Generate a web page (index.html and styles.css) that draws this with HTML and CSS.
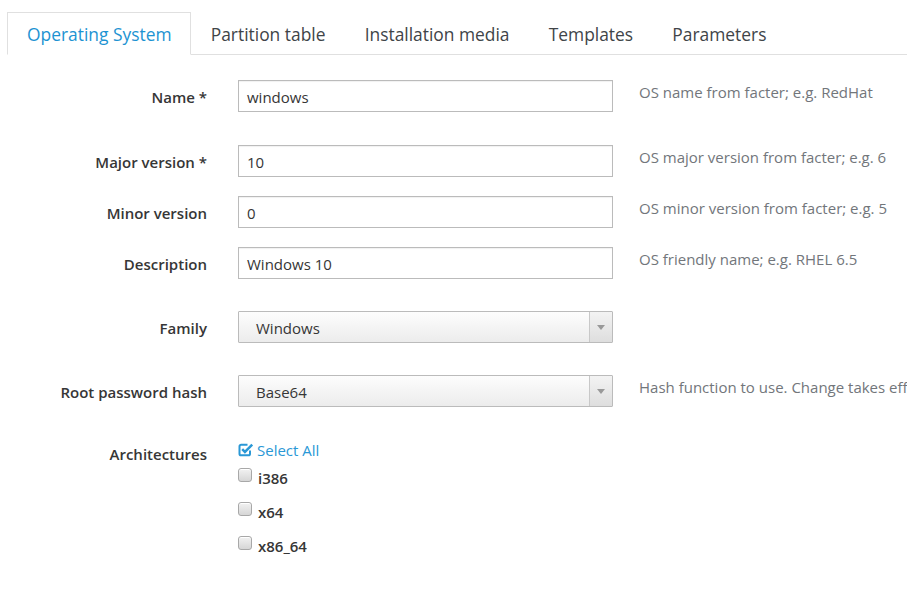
FILE: index.html
```html
<!DOCTYPE html>
<html>
<head>
<meta charset="utf-8">
<link rel="stylesheet" href="styles.css">
</head>
<body>
<div class="page">
  <ul class="tabs">
    <li class="tab active">Operating System</li>
    <li class="tab">Partition table</li>
    <li class="tab">Installation media</li>
    <li class="tab">Templates</li>
    <li class="tab">Parameters</li>
  </ul>
  <form class="form">
    <div class="row gap-first">
      <label class="label">Name *</label>
      <div class="field"><div class="input">windows</div></div>
      <div class="hint">OS name from facter; e.g. RedHat</div>
    </div>
    <div class="row gap-sm">
      <label class="label">Major version *</label>
      <div class="field"><div class="input">10</div></div>
      <div class="hint">OS major version from facter; e.g. 6</div>
    </div>
    <div class="row gap-sm">
      <label class="label">Minor version</label>
      <div class="field"><div class="input">0</div></div>
      <div class="hint">OS minor version from facter; e.g. 5</div>
    </div>
    <div class="row gap-lg">
      <label class="label">Description</label>
      <div class="field"><div class="input">Windows 10</div></div>
      <div class="hint">OS friendly name; e.g. RHEL 6.5</div>
    </div>
    <div class="row gap-lg">
      <label class="label">Family</label>
      <div class="field"><div class="select"><span class="select-text">Windows</span><span class="select-arrow"><span class="caret"></span></span></div></div>
      <div class="hint"></div>
    </div>
    <div class="row gap-xl">
      <label class="label">Root password hash</label>
      <div class="field"><div class="select"><span class="select-text">Base64</span><span class="select-arrow"><span class="caret"></span></span></div></div>
      <div class="hint">Hash function to use. Change takes effect for new or updated hosts.</div>
    </div>
    <div class="row">
      <label class="label label-arch">Architectures</label>
      <div class="field checks">
        <div class="select-all">
          <svg class="check-icon" width="16" height="15" viewBox="0 0 16 15">
            <path d="M12 8.5v3.2a1.6 1.6 0 0 1-1.6 1.6H3.1a1.6 1.6 0 0 1-1.6-1.6V4.4a1.6 1.6 0 0 1 1.6-1.6h6.4" fill="none" stroke="#2a98d6" stroke-width="2"/>
            <path d="M4.2 7.2l2.7 2.7L14.2 2.6" fill="none" stroke="#2a98d6" stroke-width="2.5"/>
          </svg>
          <span>Select All</span>
        </div>
        <div class="check"><span class="box"></span><span class="check-label">i386</span></div>
        <div class="check"><span class="box"></span><span class="check-label">x64</span></div>
        <div class="check"><span class="box"></span><span class="check-label">x86_64</span></div>
      </div>
      <div class="hint"></div>
    </div>
  </form>
</div>
</body>
</html>
```
FILE: styles.css
```css
html, body {
  margin: 0;
  padding: 0;
  background: #fff;
  overflow: hidden;
}
body {
  font-family: "Open Sans", "Noto Sans", sans-serif;
  color: #363636;
  width: 907px;
  height: 607px;
}
.page {
  padding: 12px 0 0 7px;
}
.tabs {
  list-style: none;
  margin: 0;
  padding: 0;
  display: flex;
  border-bottom: 1px solid #e0e0e0;
}
.tab {
  font-size: 17.4px;
  line-height: 24px;
  padding: 8.5px 18.6px 8.5px 18.6px;
  border: 1px solid transparent;
  margin-bottom: -1px;
  color: #404448;
}
.tab.active {
  color: #1d93d2;
  border-color: #e0e0e0;
  border-bottom-color: #fff;
  background: #fff;
  padding-left: 19px;
}
.form {
  padding-top: 25px;
}
.row {
  display: grid;
  grid-template-columns: 200px 375px 1fr;
  column-gap: 31px;
  font-size: 15px;
}
.row > .hint { margin-left: -5px; }
.gap-first { margin-bottom: 33px; }
.gap-sm { margin-bottom: 19px; }
.gap-lg { margin-bottom: 32px; }
.gap-xl { margin-bottom: 33px; }
.label {
  text-align: right;
  font-weight: 600;
  line-height: 20px;
  padding-top: 6.5px;
  color: #363636;
}
.label-arch { padding-top: 4px; }
.input {
  box-sizing: border-box;
  height: 32px;
  border: 1px solid #bbb;
  box-shadow: inset 0 1px 1px rgba(0,0,0,0.06);
  padding: 0.5px 8px 0 8px;
  line-height: 30px;
  color: #363636;
}
.hint {
  white-space: nowrap;
  color: #72767b;
  line-height: 20px;
  padding-top: 2px;
  font-size: 15px;
}
.select {
  box-sizing: border-box;
  height: 32px;
  border: 1px solid #bbb;
  border-radius: 1px;
  background: linear-gradient(#fdfdfd, #ececec);
  display: flex;
}
.select-text {
  flex: 1;
  padding-left: 17px;
  padding-top: 0.5px;
  line-height: 30px;
  color: #363636;
}
.select-arrow {
  width: 22px;
  border-left: 1px solid #c8c8c8;
  background: linear-gradient(#f3f3f3, #dedede);
  display: flex;
  align-items: center;
  justify-content: center;
}
.caret {
  width: 0;
  height: 0;
  border-left: 4px solid transparent;
  border-right: 4px solid transparent;
  border-top: 5px solid #999;
}
.checks {
  display: flex;
  flex-direction: column;
}
.select-all {
  display: flex;
  align-items: center;
  gap: 3px;
  line-height: 20px;
  color: #2a98d6;
}
.check-icon { display: block; margin-top: -1px; }
.check {
  display: flex;
  align-items: flex-start;
  gap: 6px;
  line-height: 20px;
  margin-top: 8px;
}
.check + .check { margin-top: 14px; }
.box {
  box-sizing: border-box;
  width: 14px;
  height: 14px;
  border: 1px solid #a8a8a8;
  border-radius: 3px;
  background: linear-gradient(#f2f2f2, #d6d6d6);
  box-shadow: inset 0 1px 0 #fff;
}
.check-label {
  font-weight: 600;
  color: #363636;
}
```
